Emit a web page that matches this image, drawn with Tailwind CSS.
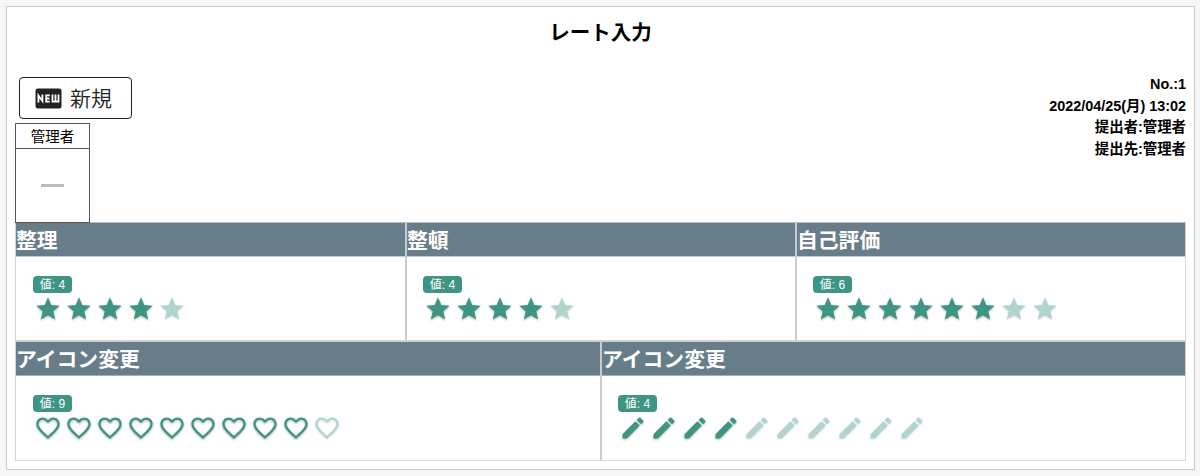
<!DOCTYPE html>
<html lang="ja">
<head>
<meta charset="utf-8">
<title>レート入力</title>
<script src="https://cdn.jsdelivr.net/npm/@tailwindcss/browser@4"></script>
</head>
<body class="h-[476px] overflow-hidden bg-[#f6f6f6] pt-1.5 pl-1.5 font-['Liberation_Sans','Noto_Sans_CJK_JP',sans-serif] text-black">
<svg class="hidden">
  <symbol id="star" viewBox="0 0 24 24"><path d="M12 17.27 18.18 21l-1.64-7.03L22 9.24l-7.19-.61L12 2 9.19 8.63 2 9.24l5.46 4.73L5.82 21z"/></symbol>
  <symbol id="heart" viewBox="0 0 24 24"><path d="M16.5 3c-1.74 0-3.41.81-4.5 2.09C10.91 3.81 9.24 3 7.5 3 4.42 3 2 5.42 2 8.5c0 3.78 3.4 6.86 8.55 11.54L12 21.35l1.45-1.32C18.6 15.36 22 12.28 22 8.5 22 5.42 19.58 3 16.5 3zm-4.4 15.55l-.1.1-.1-.1C7.14 14.24 4 11.39 4 8.5 4 6.5 5.5 5 7.5 5c1.54 0 3.04.99 3.57 2.36h1.87C13.46 5.99 14.96 5 16.5 5c2 0 3.5 1.5 3.5 3.5 0 2.89-3.14 5.74-7.9 10.05z"/></symbol>
  <symbol id="pencil" viewBox="0 0 24 24"><path d="M3 17.25V21h3.75L17.81 9.94l-3.75-3.75L3 17.25zM20.71 7.04a.996.996 0 0 0 0-1.41l-2.34-2.34a.996.996 0 0 0-1.41 0l-1.83 1.83 3.75 3.75 1.83-1.83z"/></symbol>
</svg>
<main class="flex h-[464px] w-[1189px] flex-col border border-[#c9c9c9] bg-white pl-2">
  <h1 class="mr-2 mt-2 h-8 text-center font-['Noto_Sans_CJK_JP',sans-serif] text-[20.5px] leading-8 font-bold">レート入力</h1>
  <div class="flex h-[175px] w-[1171px] justify-between">
    <div class="pt-[30px]">
      <button class="ml-1 flex h-[42px] w-[113px] items-center gap-2 rounded-[4px] border border-[#222] pl-[15px] font-['Noto_Sans_CJK_JP',sans-serif] text-[21px] leading-none text-[#222]">
        <svg class="h-[21px] w-[27px] shrink-0" viewBox="0 0 27 21"><rect x=".5" y=".5" width="26" height="20" rx="2.5" fill="#222"/><g fill="none" stroke="#fff" stroke-width="1.800"><path d="M3.400 14.500V7.500l4 5.500V6.500M14.800 7.400h-3.600v6.200h3.600M11.200 10.500h3.300M17.500 6.500v7.100h6V6.500M20.500 6.500v6.500"/></g></svg>
        <span class="mb-0.5 font-[350]">新規</span>
      </button>
      <div class="relative z-10 mt-1 h-[100px] w-[75px] border border-[#555] font-['Noto_Sans_CJK_JP',sans-serif]">
        <div class="h-[25px] border-b border-[#555] text-center text-[14.5px] leading-[24px]">管理者</div>
        <div class="flex h-[73px] items-center justify-center"><div class="h-[3.500px] w-[23px] bg-[#bdbdbd]"></div></div>
      </div>
    </div>
    <div class="pt-[27px] text-right text-[14.400px] leading-[21.600px] font-bold">
      <div>No.:1</div><div>2022/04/25(月) 13:02</div><div>提出者:管理者</div><div>提出先:管理者</div>
    </div>
  </div>
  <div class="flex w-[1171px] flex-col border border-[#d6d6d6] border-t-[#b9bfc3]">
    <div class="grid h-[119px] grid-cols-[390px_390px_389px] border-b-2 border-[#d0d0d0]">
      <section class="border-r border-[#cbcbcb]"><h2 class="h-[34px] border-b border-[#c5cbcf] bg-[#677d89] font-['Noto_Sans_CJK_JP',sans-serif] text-[20.800px] leading-[33px] font-bold text-white">整理</h2><div class="pt-[19px] pl-[17px]" data-icon="star" data-value="4" data-max="5"></div></section>
      <section class="border-r border-l border-[#cbcbcb]"><h2 class="h-[34px] border-b border-[#c5cbcf] bg-[#677d89] font-['Noto_Sans_CJK_JP',sans-serif] text-[20.800px] leading-[33px] font-bold text-white">整頓</h2><div class="pt-[19px] pl-4" data-icon="star" data-value="4" data-max="5"></div></section>
      <section class="border-l border-[#cbcbcb]"><h2 class="h-[34px] border-b border-[#c5cbcf] bg-[#677d89] font-['Noto_Sans_CJK_JP',sans-serif] text-[20.800px] leading-[33px] font-bold text-white">自己評価</h2><div class="pt-[19px] pl-4" data-icon="star" data-value="6" data-max="8"></div></section>
    </div>
    <div class="grid h-[118px] grid-cols-[585px_584px]">
      <section class="border-r border-[#cbcbcb]"><h2 class="h-[34px] border-b border-[#a3b0b7] bg-[#677d89] font-['Noto_Sans_CJK_JP',sans-serif] text-[20.800px] leading-[33px] font-bold text-white">アイコン変更</h2><div class="pt-[19px] pl-[17px]" data-icon="heart" data-value="9" data-max="10"></div></section>
      <section class="border-l border-[#cbcbcb]"><h2 class="h-[34px] border-b border-[#a3b0b7] bg-[#677d89] font-['Noto_Sans_CJK_JP',sans-serif] text-[20.800px] leading-[33px] font-bold text-white">アイコン変更</h2><div class="pt-[19px] pl-4" data-icon="pencil" data-value="4" data-max="10"></div></section>
    </div>
  </div>
</main>
<script>
document.querySelectorAll('[data-icon]').forEach(el => {
  const { icon, value, max } = el.dataset;
  let icons = '';
  for (let i = 0; i < +max; i++) {
    icons += `<svg class="${i < +value ? 'size-7 shrink-0 fill-[#3e9583] drop-shadow-[0_1px_1px_rgba(0,0,0,0.3)]' : 'size-7 shrink-0 fill-[#3e9583] opacity-40 drop-shadow-[0_1px_1px_rgba(0,0,0,0.3)]'}"><use href="#${icon}"/></svg>`;
  }
  el.innerHTML = `<div class="h-[17px] w-[39px] rounded-[4px] bg-[#3e9583] text-center text-[12px] leading-[18px] text-white">値: ${value}</div><div class="mt-0.5 ml-[0.500px] flex gap-[3.100px]">${icons}</div>`;
});
</script>
</body>
</html>
